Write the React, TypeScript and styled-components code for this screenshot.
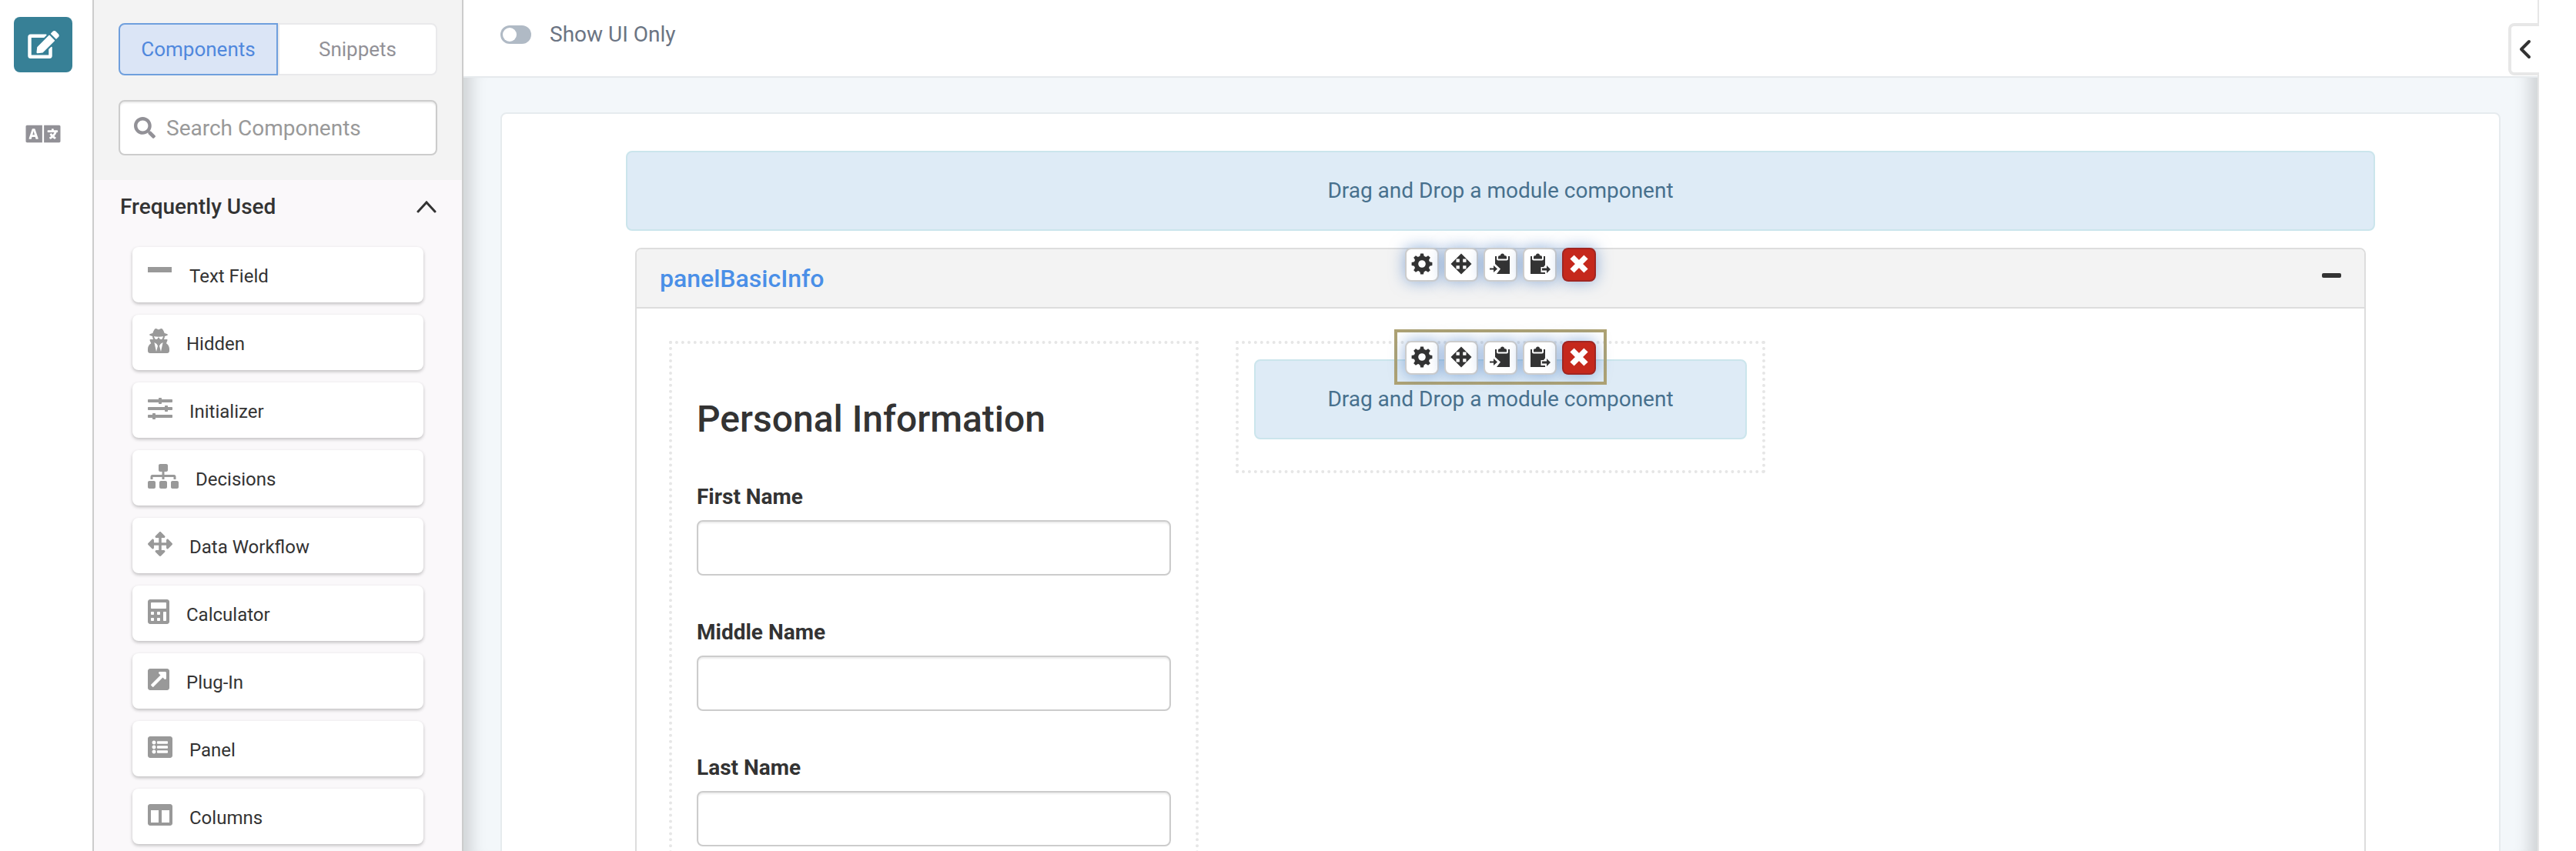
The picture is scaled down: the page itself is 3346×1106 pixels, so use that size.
import React, { useState } from "react";
import styled, { createGlobalStyle } from "styled-components";
import {
  FaArrowsAlt,
  FaCalculator,
  FaColumns,
  FaEdit,
  FaExternalLinkSquareAlt,
  FaLanguage,
  FaListAlt,
  FaSearch,
  FaSitemap,
  FaSlidersH,
  FaUserSecret,
} from "react-icons/fa";

const GlobalStyle = createGlobalStyle`
  *, *::before, *::after { box-sizing: border-box; }
  body {
    margin: 0;
    background: #fff;
    color: #333;
    font-family: Roboto, "Liberation Sans", sans-serif;
    font-size: 28px;
    line-height: 40px;
  }
  button, input { font: inherit; color: inherit; margin: 0; }
  button { padding: 0; cursor: pointer; }
  svg { display: block; flex: none; }
`;

const Shell = styled.div`
  display: flex;
  height: 100vh;
  overflow: hidden;
`;

const Rail = styled.nav`
  flex: none;
  width: 122px;
  padding: 22px 26px 0 18px;
  border-right: 2px solid #ccc;
  display: flex;
  flex-direction: column;
  gap: 44px;
`;

const RailButton = styled.button<{ $active?: boolean; $icon: number }>`
  width: 76px;
  height: 72px;
  border: 0;
  border-radius: 8px;
  display: flex;
  align-items: center;
  justify-content: center;
  background: ${(p) => (p.$active ? "#378096" : "transparent")};
  color: ${(p) => (p.$active ? "#fff" : "#929197")};
  svg { width: ${(p) => p.$icon}px; height: 36px; }
`;

const Sidebar = styled.aside`
  flex: none;
  width: 480px;
  border-right: 2px solid #ccc;
  background: #faf8fa;
`;

const SidebarTop = styled.div`
  padding: 30px 32px 32px;
  background: #f3f3f3;
  display: flex;
  flex-direction: column;
  gap: 32px;
`;

const Tabs = styled.div`
  display: grid;
  grid-template-columns: 1fr 1fr;
`;

const Tab = styled.button<{ $active?: boolean }>`
  height: 68px;
  font-size: 26px;
  border: 2px solid ${(p) => (p.$active ? "#6f9fdd" : "#e9e9eb")};
  background: ${(p) => (p.$active ? "#dbe5f6" : "#fff")};
  color: ${(p) => (p.$active ? "#5088dd" : "#929197")};
  &:first-child { border-radius: 8px 0 0 8px; }
  &:last-child { border-radius: 0 8px 8px 0; }
`;

const SearchBox = styled.label`
  height: 72px;
  padding: 0 18px;
  display: flex;
  align-items: center;
  gap: 14px;
  border: 2px solid #ccc;
  border-radius: 8px;
  background: #fff;
  box-shadow: inset 0 2px 2px rgba(0, 0, 0, 0.08);
  color: #929197;
`;

const SearchInput = styled.input`
  flex: 1;
  min-width: 0;
  border: 0;
  padding: 2px 0 0;
  outline: 0;
  background: transparent;
  &::placeholder { color: #999; opacity: 1; }
`;

const SectionToggle = styled.button`
  width: 100%;
  height: 68px;
  padding: 2px 33px 0 34px;
  border: 0;
  background: transparent;
  display: flex;
  align-items: center;
  justify-content: space-between;
  font-weight: 500;
`;

const PartList = styled.ul`
  list-style: none;
  margin: 0;
  padding: 19px 50px 0;
  display: flex;
  flex-direction: column;
  gap: 16px;
`;

const PartCard = styled.li`
  height: 72px;
  padding: 4px 20px 0;
  display: flex;
  align-items: center;
  gap: 22px;
  border-radius: 8px;
  background: #fff;
  box-shadow: 0 2px 4px rgba(0, 0, 0, 0.24);
  font-size: 24px;
  color: #333;
  cursor: move;
`;

const PartIcon = styled.span<{ $width: number }>`
  flex: none;
  width: ${(p) => p.$width}px;
  padding-bottom: 8px;
  color: #999;
  svg { width: 100%; height: 32px; }
`;

const Main = styled.main`
  flex: 1;
  min-width: 0;
  display: flex;
  flex-direction: column;
`;

const TopBar = styled.header`
  flex: none;
  height: 101px;
  padding: 0 48px;
  border-bottom: 2px solid #e6eaed;
  display: flex;
  align-items: flex-start;
`;

const SwitchLabel = styled.label`
  height: 90px;
  display: flex;
  align-items: center;
  gap: 24px;
  color: #6b7483;
`;

const Switch = styled.input`
  appearance: none;
  width: 40px;
  height: 24px;
  padding: 3px;
  border-radius: 12px;
  background: #b0bac5;
  display: flex;
  cursor: pointer;
  &::before {
    content: "";
    width: 18px;
    height: 18px;
    border-radius: 50%;
    background: #fff;
  }
  &:checked { background: #378096; justify-content: flex-end; }
`;

const Stage = styled.section`
  flex: 1;
  min-height: 0;
  overflow: hidden;
  padding: 45px 48px 0;
  background: #f3f7fa;
  box-shadow: inset 28px 0 20px -18px rgba(0, 0, 0, 0.15), inset -28px 0 20px -18px rgba(0, 0, 0, 0.15);
`;

const Canvas = styled.div`
  min-height: 1200px;
  padding: 48px 161px;
  border: 2px solid #e6ebee;
  border-radius: 8px;
  background: #fff;
`;

const DropZone = styled.div`
  height: 104px;
  display: flex;
  align-items: center;
  justify-content: center;
  border: 2px solid #cbe5ec;
  border-radius: 8px;
  background: #deebf6;
  color: #47708d;
`;

const Panel = styled.section`
  position: relative;
  margin: 22px 12px 0;
  border: 2px solid #ddd;
  border-radius: 8px;
`;

const PanelHeader = styled.header`
  height: 77px;
  padding: 0 30px;
  display: flex;
  align-items: center;
  justify-content: space-between;
  border-bottom: 2px solid #ddd;
  border-radius: 6px 6px 0 0;
  background: #f3f3f3;
`;

const PanelTitle = styled.h2`
  margin: 0;
  font-size: 32px;
  font-weight: 500;
  color: #4a8fe7;
`;

const CollapseButton = styled.button`
  padding-bottom: 8px;
  border: 0;
  background: transparent;
`;

const PanelBody = styled.div`
  padding: 42px;
  display: grid;
  grid-template-columns: repeat(3, minmax(0, 1fr));
  gap: 48px;
  align-items: start;
`;

const Column = styled.div`
  position: relative;
  padding: 20px 20px 40px;
  border: 4px dotted #e6e6e6;
`;

const FieldColumn = styled(Column)`
  padding: 32px 32px 72px;
`;

const Heading = styled.h1`
  margin: 34px 0 49px;
  font-size: 48px;
  line-height: 64px;
  font-weight: 500;
`;

const Field = styled.div`
  display: flex;
  flex-direction: column;
  gap: 10px;
  margin-bottom: 54px;
`;

const FieldLabel = styled.label`
  font-weight: 700;
`;

const TextInput = styled.input`
  width: 100%;
  height: 72px;
  padding: 0 20px;
  border: 2px solid #ccc;
  border-radius: 8px;
  background: #fff;
  box-shadow: inset 0 2px 2px rgba(0, 0, 0, 0.08);
`;

const Tools = styled.div<{ $framed?: boolean }>`
  position: absolute;
  z-index: 1;
  top: ${(p) => (p.$framed ? "-19px" : "-2px")};
  left: 50%;
  transform: translateX(-50%);
  display: flex;
  gap: 7px;
  padding: ${(p) => (p.$framed ? "11px 10px 9px" : "0")};
  border: ${(p) => (p.$framed ? "4px solid #aea273" : "0")};
`;

const ToolButton = styled.button<{ $danger?: boolean }>`
  width: 44px;
  height: 44px;
  padding-bottom: 2px;
  display: flex;
  align-items: center;
  justify-content: center;
  border: 2px solid ${(p) => (p.$danger ? "#a02622" : "#ccc")};
  border-radius: 8px;
  background: ${(p) => (p.$danger ? "#c5281c" : "#fff")};
  color: ${(p) => (p.$danger ? "#fff" : "#333")};
  box-shadow: 0 0 20px rgba(72, 123, 194, 0.6);
`;

const Dock = styled.aside`
  position: relative;
  flex: none;
  width: 50px;
  border-left: 2px solid #e6e6e6;
  background: #fff;
`;

const DockButton = styled.button`
  position: absolute;
  top: 30px;
  right: 48px;
  width: 40px;
  height: 68px;
  display: flex;
  align-items: center;
  justify-content: center;
  border: 4px solid #e7e7e7;
  border-right: 0;
  border-radius: 8px 0 0 8px;
  background: #fff;
`;

const DashIcon = () => (
  <svg viewBox="0 0 32 32" fill="currentColor">
    <rect x="0" y="8" width="31" height="7" />
  </svg>
);

const ChevronUp = () => (
  <svg width="26" height="16" viewBox="0 0 26 16" fill="none" stroke="currentColor" strokeWidth="3" strokeLinecap="round">
    <path d="M2 14 13 2 24 14" />
  </svg>
);

const ChevronLeft = () => (
  <svg width="16" height="26" viewBox="0 0 16 26" fill="none" stroke="currentColor" strokeWidth="4" strokeLinecap="round" strokeLinejoin="round">
    <path d="M13 3 3 13 13 23" />
  </svg>
);

const MinusIcon = () => (
  <svg width="25" height="6" viewBox="0 0 25 6" fill="currentColor">
    <rect width="25" height="6" rx="2" />
  </svg>
);

const teeth = [0, 45, 90, 135, 180, 225, 270, 315];

const GearIcon = () => (
  <svg width="28" height="28" viewBox="0 0 28 28">
    <circle cx="14" cy="14" r="7.6" fill="none" stroke="currentColor" strokeWidth="5.6" />
    {teeth.map((a) => (
      <path key={a} d="M11 5 12.100 0.6h3.800L17 5z" fill="currentColor" transform={`rotate(${a} 14 14)`} />
    ))}
  </svg>
);

const MoveIcon = () => (
  <svg width="28" height="28" viewBox="0 0 28 28" fill="currentColor">
    <path d="M14 0.5 21 7.5H16.2V11.8H20.5V7L27.5 14 20.5 21V16.2H16.2V20.5H21L14 27.5 7 20.5H11.8V16.2H7.5V21L0.5 14 7.5 7V11.8H11.8V7.5H7z" />
  </svg>
);

const CopyIcon = () => (
  <svg width="28" height="28" viewBox="1 0 28 28" fill="currentColor">
    <path d="M8 4h2v3.500q0 2 2 2h11q2 0 2-2V4h2v23H10l5-6.500-7-6.500z" />
    <path d="M12 7.500V5q0-2 3-2 0-2.500 2.500-2.500T20 3q3 0 3 2v2.500z" />
    <path d="M1 19.500h5V16l5 4.500-5 4.500v-3.500H1z" />
  </svg>
);

const PasteIcon = () => (
  <svg width="28" height="28" viewBox="-1 0 28 28" fill="currentColor">
    <path d="M1 4h2v3.500q0 2 2 2h11q2 0 2-2V4h2v11.500L18 18h-3.500v7H20v2H1z" />
    <path d="M5 7.500V5q0-2 3-2 0-2.500 2.500-2.500T13 3q3 0 3 2v2.500z" />
    <path d="M16 19.500h6V16l5 5-5 5v-3.500h-6z" />
  </svg>
);

const CrossIcon = () => (
  <svg width="24" height="24" viewBox="0 0 24 24" stroke="currentColor" strokeWidth="7.400">
    <path d="M3 3 21 21M21 3 3 21" />
  </svg>
);

const parts = [
  { name: "Text Field", icon: <DashIcon />, width: 32 },
  { name: "Hidden", icon: <FaUserSecret />, width: 28 },
  { name: "Initializer", icon: <FaSlidersH />, width: 32 },
  { name: "Decisions", icon: <FaSitemap />, width: 40 },
  { name: "Data Workflow", icon: <FaArrowsAlt />, width: 32 },
  { name: "Calculator", icon: <FaCalculator />, width: 28 },
  { name: "Plug-In", icon: <FaExternalLinkSquareAlt />, width: 28 },
  { name: "Panel", icon: <FaListAlt />, width: 32 },
  { name: "Columns", icon: <FaColumns />, width: 32 },
];

const fields = [
  { id: "first-name", label: "First Name" },
  { id: "middle-name", label: "Middle Name" },
  { id: "last-name", label: "Last Name" },
];

const ComponentTools = ({ framed }: { framed?: boolean }) => (
  <Tools $framed={framed}>
    <ToolButton aria-label="Settings"><GearIcon /></ToolButton>
    <ToolButton aria-label="Move"><MoveIcon /></ToolButton>
    <ToolButton aria-label="Copy"><CopyIcon /></ToolButton>
    <ToolButton aria-label="Paste below"><PasteIcon /></ToolButton>
    <ToolButton $danger aria-label="Remove"><CrossIcon /></ToolButton>
  </Tools>
);

export default function App() {
  const [tab, setTab] = useState("Components");
  return (
    <>
      <GlobalStyle />
      <Shell>
        <Rail>
          <RailButton $active $icon={41} aria-label="Edit"><FaEdit /></RailButton>
          <RailButton $icon={46} aria-label="Translate"><FaLanguage /></RailButton>
        </Rail>
        <Sidebar>
          <SidebarTop>
            <Tabs>
              {["Components", "Snippets"].map((name) => (
                <Tab key={name} $active={tab === name} onClick={() => setTab(name)}>{name}</Tab>
              ))}
            </Tabs>
            <SearchBox>
              <FaSearch />
              <SearchInput placeholder="Search Components" aria-label="Search Components" />
            </SearchBox>
          </SidebarTop>
          <SectionToggle aria-expanded="true">
            Frequently Used
            <ChevronUp />
          </SectionToggle>
          <PartList>
            {parts.map((p) => (
              <PartCard key={p.name}>
                <PartIcon $width={p.width}>{p.icon}</PartIcon>
                {p.name}
              </PartCard>
            ))}
          </PartList>
        </Sidebar>
        <Main>
          <TopBar>
            <SwitchLabel>
              <Switch type="checkbox" role="switch" />
              Show UI Only
            </SwitchLabel>
          </TopBar>
          <Stage>
            <Canvas>
              <DropZone>Drag and Drop a module component</DropZone>
              <Panel>
                <ComponentTools />
                <PanelHeader>
                  <PanelTitle>panelBasicInfo</PanelTitle>
                  <CollapseButton aria-label="Collapse panel"><MinusIcon /></CollapseButton>
                </PanelHeader>
                <PanelBody>
                  <FieldColumn>
                    <Heading>Personal Information</Heading>
                    {fields.map((f) => (
                      <Field key={f.id}>
                        <FieldLabel htmlFor={f.id}>{f.label}</FieldLabel>
                        <TextInput id={f.id} type="text" />
                      </Field>
                    ))}
                  </FieldColumn>
                  <Column>
                    <ComponentTools framed />
                    <DropZone>Drag and Drop a module component</DropZone>
                  </Column>
                </PanelBody>
              </Panel>
            </Canvas>
          </Stage>
        </Main>
        <Dock>
          <DockButton aria-label="Open side panel"><ChevronLeft /></DockButton>
        </Dock>
      </Shell>
    </>
  );
}
